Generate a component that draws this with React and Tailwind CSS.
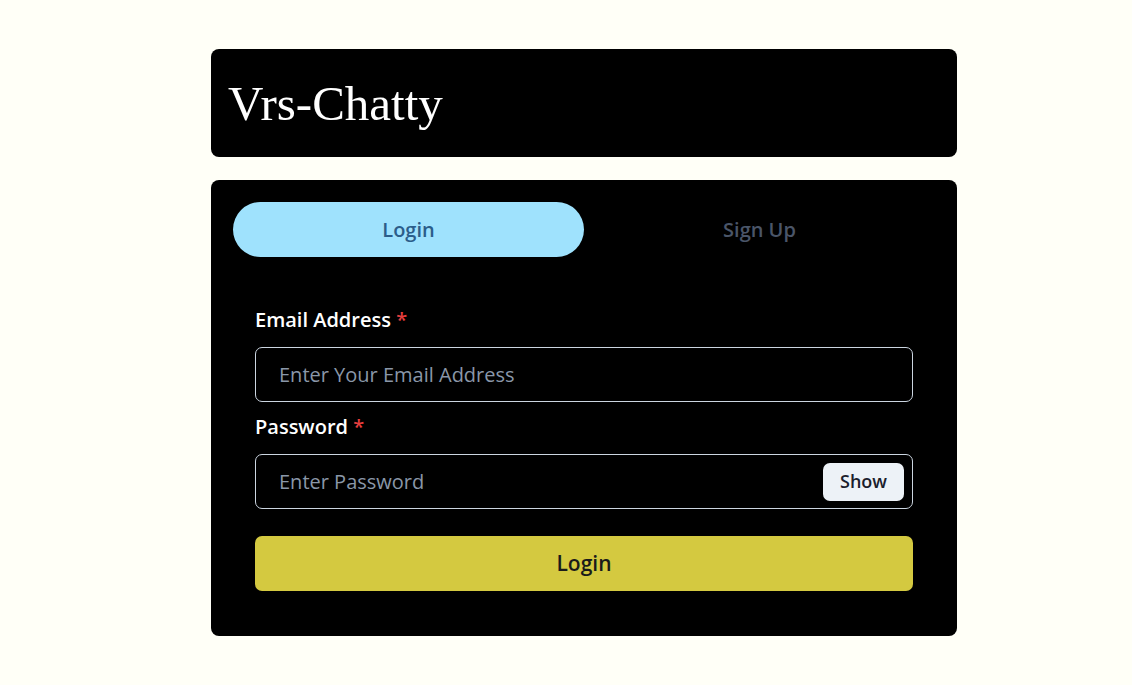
export default function App() {
  const ui = { fontFamily: '"Open Sans", "Noto Sans", sans-serif' };
  return (
    <div className="min-h-[685px] w-full bg-[#fffff7]" style={ui}>
      <div className="ml-[211px] flex w-[746px] flex-col pt-[49px]">
        <div className="flex h-[108px] items-center rounded-lg bg-black px-[17px]">
          <h1
            className="text-[49px] leading-none text-white"
            style={{ fontFamily: '"Liberation Serif", "Times New Roman", serif' }}
          >
            Vrs-Chatty
          </h1>
        </div>
        <div className="mt-[23px] rounded-lg bg-black px-[22px] pt-[22px] pb-[45px]">
          <div className="flex">
            <div className="flex h-[55px] flex-1 items-center justify-center rounded-full bg-[#9fe2fd] text-[20px] font-semibold text-[#2b5d8a]">
              Login
            </div>
            <div className="flex h-[55px] flex-1 items-center justify-center text-[20px] font-semibold text-[#4a5568]">
              Sign Up
            </div>
          </div>
          <div className="flex flex-col px-[22px] pt-[51px]">
            <label className="text-[20px] font-semibold leading-[24px] text-white">
              Email Address <span className="text-[#e53e3e]">*</span>
            </label>
            <div className="mt-[15px] flex h-[55px] items-center rounded-[7px] border border-[#cbd5e0] px-[23px] text-[20px] text-[#8a97a8]">
              Enter Your Email Address
            </div>
            <label className="mt-[13px] text-[20px] font-semibold leading-[24px] text-white">
              Password <span className="text-[#e53e3e]">*</span>
            </label>
            <div className="mt-[15px] flex h-[55px] items-center justify-between rounded-[7px] border border-[#cbd5e0] pl-[23px] pr-[8px] text-[20px] text-[#8a97a8]">
              <span>Enter Password</span>
              <div className="flex h-[38px] w-[81px] items-center justify-center rounded-[7px] bg-[#edf2f7] text-[18px] font-semibold text-[#1a202c]">
                Show
              </div>
            </div>
            <div className="mt-[27px] flex h-[55px] items-center justify-center rounded-[7px] bg-[#d4c940] text-[21px] font-semibold text-[#1a1a1a]">
              Login
            </div>
          </div>
        </div>
      </div>
    </div>
  );
}
